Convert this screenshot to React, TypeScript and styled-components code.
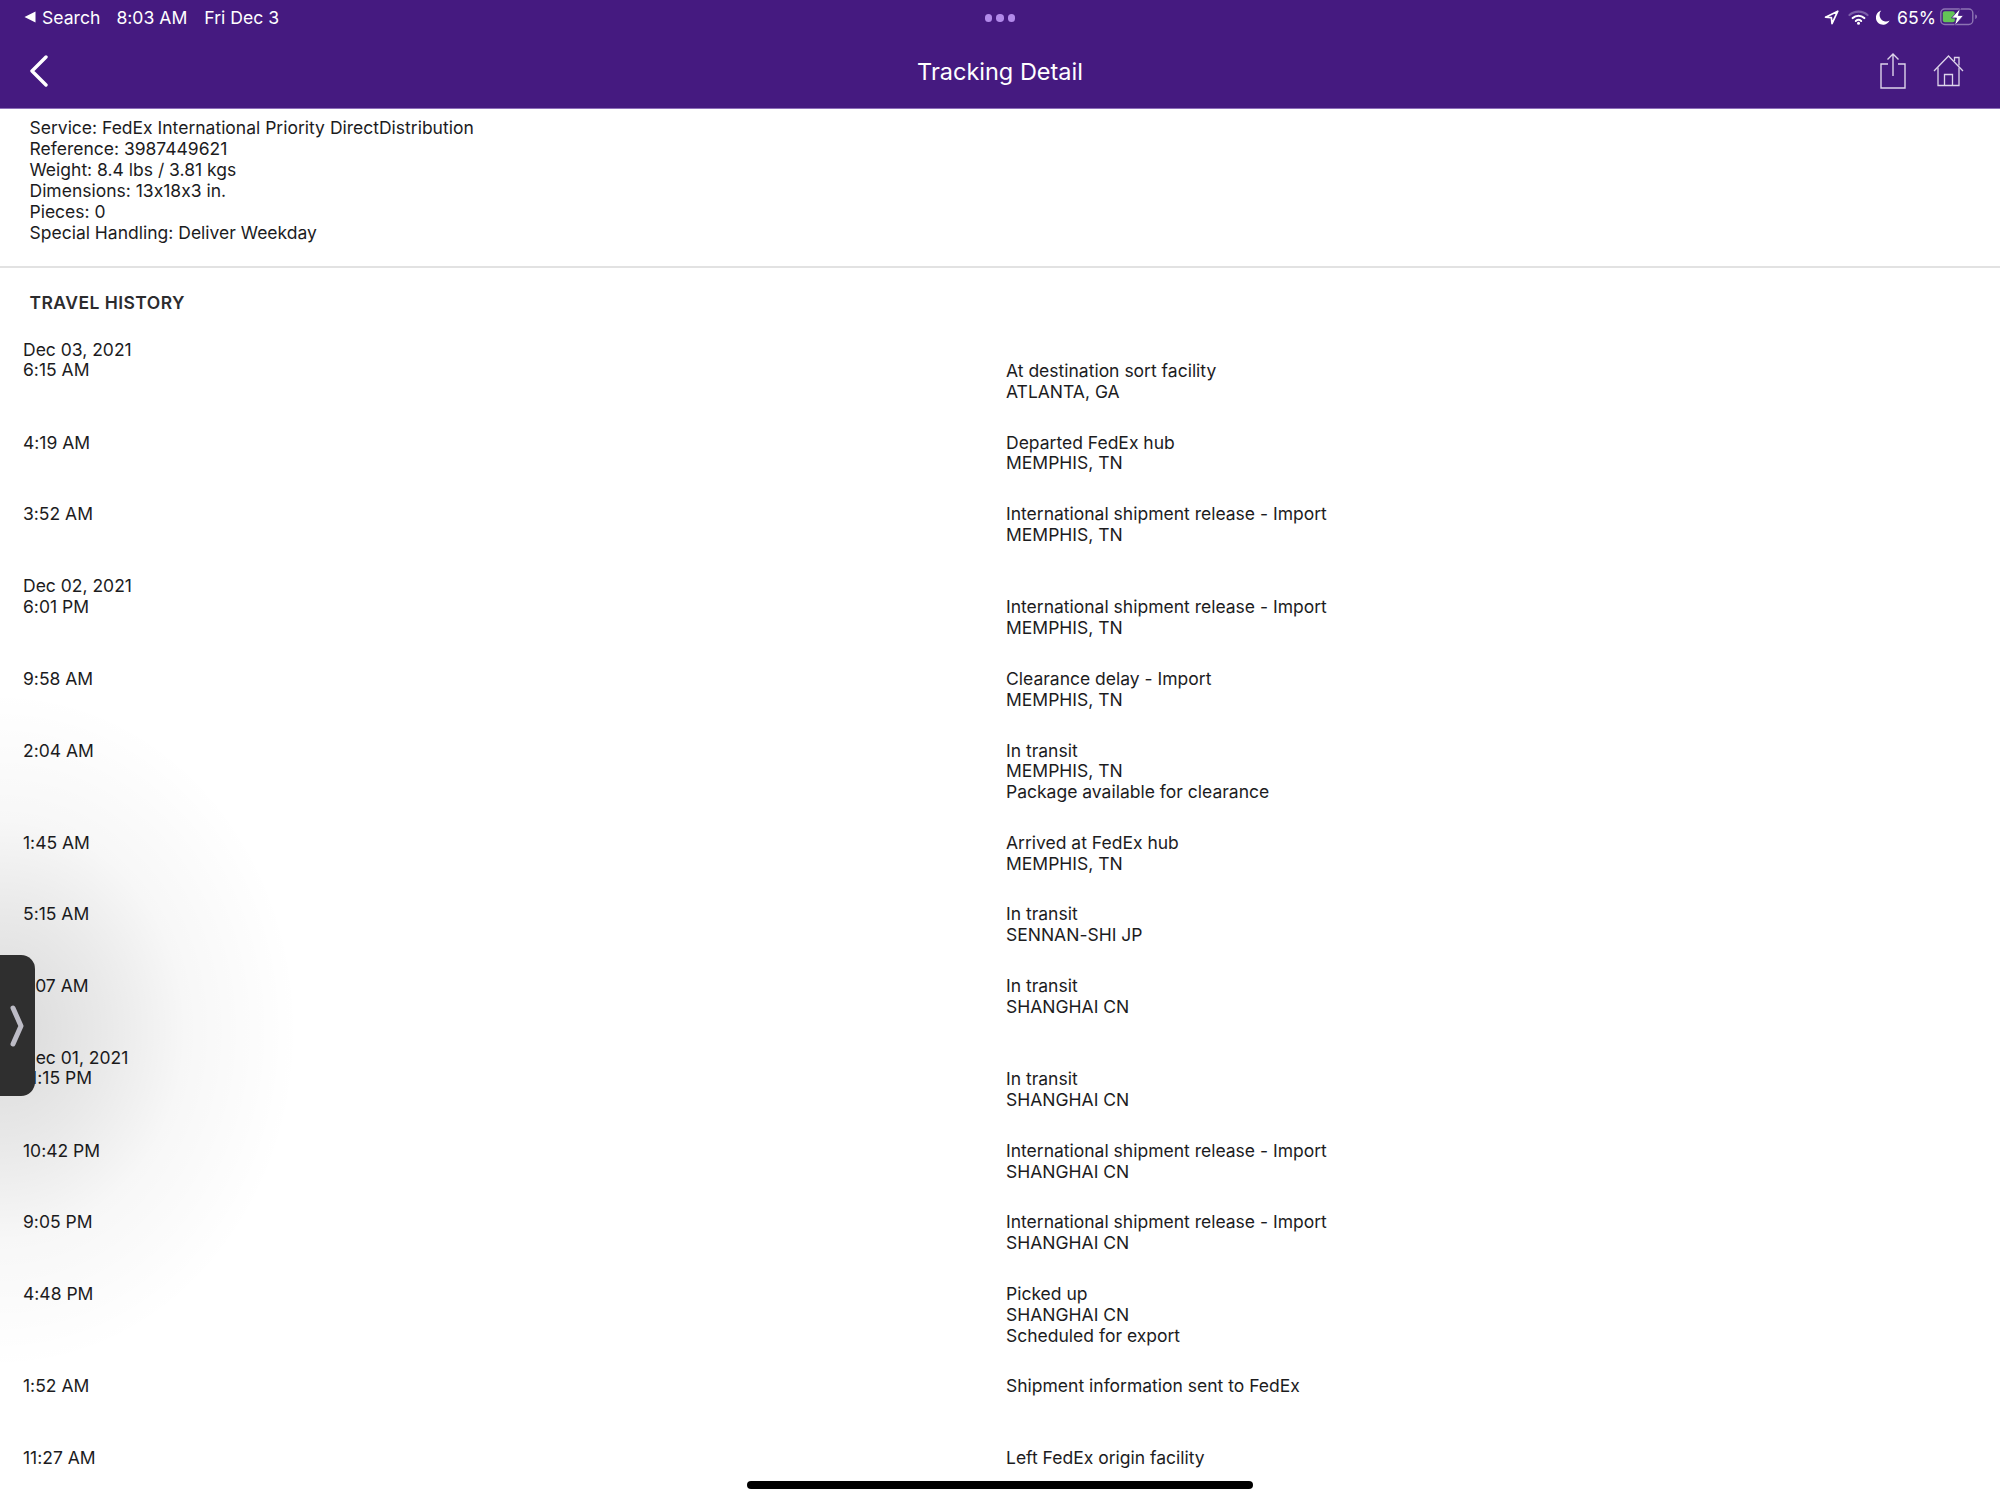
import React from 'react';
import styled, { createGlobalStyle } from 'styled-components';

const GlobalStyle = createGlobalStyle`
  html, body {
    margin: 0;
    padding: 0;
    background: #fff;
  }
  body {
    font-family: Inter, "Liberation Sans", sans-serif;
    font-feature-settings: "calt" 0;
    color: #1c1c1e;
  }
`;

const Screen = styled.div`
  position: relative;
  width: 2000px;
  height: 1500px;
  overflow: hidden;
  background: #fff;
`;

const Header = styled.header`
  height: 108px;
  background: #451a80;
  color: #fff;
  border-bottom: 1px solid #8d6fb8;
`;

const StatusBar = styled.div`
  height: 34px;
  display: grid;
  grid-template-columns: 1fr auto 1fr;
  align-items: center;
  padding: 0 22px 0 24px;
  font-size: 17.6px;
`;

const StatusLeft = styled.div`
  display: flex;
  align-items: center;
`;

const StatusItem = styled.span<{ $gap?: number }>`
  margin-left: ${p => p.$gap ?? 0}px;
  white-space: nowrap;
`;

const Dots = styled.div`
  display: flex;
  gap: 4px;
  margin-top: 2px;
  margin-left: -2px;
`;

const Dot = styled.i`
  display: block;
  width: 7.5px;
  height: 7.5px;
  border-radius: 50%;
  background: #b28aea;
`;

const StatusRight = styled.div`
  display: flex;
  justify-content: flex-end;
  align-items: center;
  gap: 7px;
`;

const LocationSlot = styled.span`
  display: flex;
  margin-right: 2px;
`;

const Percent = styled.span`
  margin-right: -3px;
`;

const NavBar = styled.div`
  height: 74px;
  display: grid;
  grid-template-columns: 1fr auto 1fr;
  align-items: center;
  padding: 0 36px;
`;

const NavBack = styled.div`
  margin-left: -6px;
  display: flex;
  align-items: center;
`;

const NavTitle = styled.div`
  font-size: 23.5px;
  text-align: center;
  margin-top: 1px;
`;

const NavActions = styled.div`
  display: flex;
  justify-content: flex-end;
  align-items: center;
  gap: 27px;
  margin-top: -1px;
`;

const Details = styled.section`
  padding: 9px 29.5px 23px;
  border-bottom: 2px solid #e2e2e2;
  font-size: 17.5px;
  line-height: 20.9px;
`;

const SectionTitle = styled.h2`
  margin: 0;
  padding: 24px 29.5px 11.1px;
  font-size: 17.5px;
  line-height: 21px;
  font-weight: 600;
  letter-spacing: 0.45px;
  color: #2c2c2e;
`;

const Row = styled.div`
  display: grid;
  grid-template-columns: 983px 1fr;
  padding: 15px 0 15px 23px;
  min-height: 41.6px;
  font-size: 17.5px;
  line-height: 20.8px;
`;

const LineBlock = styled.div<{ $offset?: boolean }>`
  padding-top: ${p => (p.$offset ? '21.5px' : '0')};
`;

const Line = styled.div`
  white-space: nowrap;
`;

const Shade = styled.div`
  position: absolute;
  left: -300px;
  top: 690px;
  width: 600px;
  height: 680px;
  background: radial-gradient(closest-side, rgba(0, 0, 0, 0.15), rgba(0, 0, 0, 0.085) 35%, rgba(0, 0, 0, 0.03) 62%, rgba(0, 0, 0, 0) 100%);
  pointer-events: none;
`;

const Handle = styled.div`
  position: absolute;
  left: 0;
  top: 955px;
  width: 35px;
  height: 141px;
  background: #2f2f2f;
  border-radius: 0 14px 14px 0;
  display: flex;
  align-items: center;
  padding-left: 9px;
  box-sizing: border-box;
`;

const HomeIndicator = styled.div`
  position: absolute;
  left: 747px;
  top: 1481px;
  width: 506px;
  height: 8px;
  border-radius: 4px;
  background: #000;
`;

type Event = {
  date?: string;
  time: string;
  lines: string[];
};

const details = [
  'Service: FedEx International Priority DirectDistribution',
  'Reference: 3987449621',
  'Weight: 8.4 lbs / 3.81 kgs',
  'Dimensions: 13x18x3 in.',
  'Pieces: 0',
  'Special Handling: Deliver Weekday',
];

const events: Event[] = [
  { date: 'Dec 03, 2021', time: '6:15 AM', lines: ['At destination sort facility', 'ATLANTA, GA'] },
  { time: '4:19 AM', lines: ['Departed FedEx hub', 'MEMPHIS, TN'] },
  { time: '3:52 AM', lines: ['International shipment release - Import', 'MEMPHIS, TN'] },
  { date: 'Dec 02, 2021', time: '6:01 PM', lines: ['International shipment release - Import', 'MEMPHIS, TN'] },
  { time: '9:58 AM', lines: ['Clearance delay - Import', 'MEMPHIS, TN'] },
  { time: '2:04 AM', lines: ['In transit', 'MEMPHIS, TN', 'Package available for clearance'] },
  { time: '1:45 AM', lines: ['Arrived at FedEx hub', 'MEMPHIS, TN'] },
  { time: '5:15 AM', lines: ['In transit', 'SENNAN-SHI JP'] },
  { time: '1:07 AM', lines: ['In transit', 'SHANGHAI CN'] },
  { date: 'Dec 01, 2021', time: '11:15 PM', lines: ['In transit', 'SHANGHAI CN'] },
  { time: '10:42 PM', lines: ['International shipment release - Import', 'SHANGHAI CN'] },
  { time: '9:05 PM', lines: ['International shipment release - Import', 'SHANGHAI CN'] },
  { time: '4:48 PM', lines: ['Picked up', 'SHANGHAI CN', 'Scheduled for export'] },
  { time: '1:52 AM', lines: ['Shipment information sent to FedEx'] },
  { time: '11:27 AM', lines: ['Left FedEx origin facility'] },
];

const BackTriangle = () => (
  <svg width="12" height="12" viewBox="0 0 12 12">
    <path d="M11.5 0.5v11L0.5 6z" fill="#fff" />
  </svg>
);

const LocationIcon = () => (
  <svg width="15" height="15" viewBox="0 0 15 15" fill="none" stroke="#fff" strokeWidth="1.7" strokeLinejoin="round">
    <path d="M13.8 1.2L1.5 7.2l5.9.4.6 6z" />
  </svg>
);

const WifiIcon = () => (
  <svg width="21" height="15" viewBox="0 0 21 15" fill="none" strokeLinecap="round">
    <path d="M1.5 5C6.5 .4 14.5 .4 19.5 5" stroke="#7c5fa9" strokeWidth="2.2" />
    <path d="M4.7 8C8 5 13 5 16.3 8" stroke="#fff" strokeWidth="2.2" />
    <path d="M7.8 11C9.3 9.7 11.7 9.7 13.2 11" stroke="#fff" strokeWidth="2" />
    <circle cx="10.5" cy="13.2" r="1.5" fill="#fff" />
  </svg>
);

const MoonIcon = () => (
  <svg width="14" height="15" viewBox="0 0 14 15">
    <path d="M5.2 0.6A7.2 7.2 0 1 0 13.6 10.6 6.6 6.6 0 0 1 5.2 0.6z" fill="#fff" />
  </svg>
);

const BatteryIcon = () => (
  <svg width="38" height="18" viewBox="0 0 38 18" fill="none">
    <rect x="0.8" y="1" width="32" height="15.5" rx="4" stroke="#8d74b3" strokeWidth="1.4" />
    <rect x="2.8" y="3.2" width="12" height="11" rx="2" fill="#63c457" />
    <path d="M35.2 6.5c1.3.4 1.8 1.2 1.8 2.2s-.5 1.9-1.8 2.3z" fill="#8d74b3" />
    <path d="M20.5 0L11.5 10h5l-2 8 9-10.5h-5.2z" fill="#fff" stroke="#451a80" strokeWidth="0.8" />
  </svg>
);

const BackChevron = () => (
  <svg width="18" height="32" viewBox="0 0 18 32" fill="none" stroke="#fff" strokeWidth="3.4" strokeLinecap="round" strokeLinejoin="round">
    <path d="M16 2L2 16l14 14" />
  </svg>
);

const ShareIcon = () => (
  <svg width="26" height="36" viewBox="0 0 26 36" fill="none" stroke="#ddd4ea" strokeWidth="1.4">
    <path d="M8 11H1v24h24V11h-7" />
    <path d="M13 1v22M7.5 6.5L13 1l5.5 5.5" />
  </svg>
);

const HomeIcon = () => (
  <svg width="31" height="33" viewBox="0 0 31 33" fill="none" stroke="#ddd4ea" strokeWidth="1.3">
    <path d="M1 17L15.5 2 30 17" />
    <path d="M5 13.5V31.5h21V13.5" />
    <path d="M11.5 31.5V20.5h8v11" />
    <path d="M21.5 7V3.5h4.5V11.5" />
  </svg>
);

const HandleChevron = () => (
  <svg width="16" height="42" viewBox="0 0 16 42" fill="none" stroke="#bdbcc6" strokeWidth="5" strokeLinecap="round" strokeLinejoin="round">
    <path d="M4 3l8 18-8 18" />
  </svg>
);

export default function App() {
  return (
    <Screen>
      <GlobalStyle />
      <Header>
        <StatusBar>
          <StatusLeft>
            <BackTriangle />
            <StatusItem $gap={6}>Search</StatusItem>
            <StatusItem $gap={16}>8:03 AM</StatusItem>
            <StatusItem $gap={17}>Fri Dec 3</StatusItem>
          </StatusLeft>
          <Dots>
            <Dot />
            <Dot />
            <Dot />
          </Dots>
          <StatusRight>
            <LocationSlot>
              <LocationIcon />
            </LocationSlot>
            <WifiIcon />
            <MoonIcon />
            <Percent>65%</Percent>
            <BatteryIcon />
          </StatusRight>
        </StatusBar>
        <NavBar>
          <NavBack>
            <BackChevron />
          </NavBack>
          <NavTitle>Tracking Detail</NavTitle>
          <NavActions>
            <ShareIcon />
            <HomeIcon />
          </NavActions>
        </NavBar>
      </Header>

      <Details>
        {details.map(text => (
          <Line key={text}>{text}</Line>
        ))}
      </Details>

      <SectionTitle>TRAVEL HISTORY</SectionTitle>

      {events.map(event => (
        <Row key={event.time + event.lines[0]}>
          <LineBlock>
            {event.date && <Line>{event.date}</Line>}
            <Line>{event.time}</Line>
          </LineBlock>
          <LineBlock $offset={!!event.date}>
            {event.lines.map(line => (
              <Line key={line}>{line}</Line>
            ))}
          </LineBlock>
        </Row>
      ))}

      <Shade />
      <Handle>
        <HandleChevron />
      </Handle>
      <HomeIndicator />
    </Screen>
  );
}
